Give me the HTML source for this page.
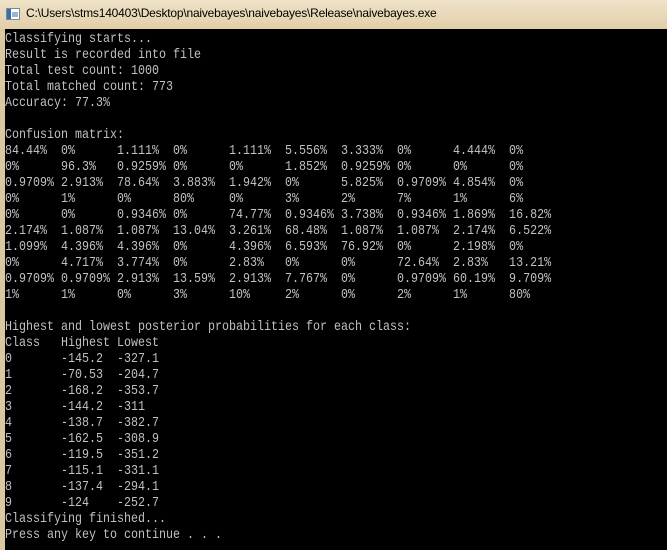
<!DOCTYPE html>
<html><head><style>
html,body{margin:0;padding:0;width:667px;height:550px;overflow:hidden;background:#000}
.t{position:absolute;left:0;top:0;width:667px;height:29px;background:linear-gradient(#efe2c8,#e2cfa9);}
.t .ic{position:absolute;left:6px;top:8px;width:12px;height:10px;background:#fff;border:1px solid #7a8a9a}
.t .ic:before{content:"";position:absolute;left:0;top:0;width:4px;height:10px;background:#3a6ea5}
.t .ic:after{content:"";position:absolute;left:5px;top:3px;width:6px;height:5px;background:#9db4cc}
.t span{position:absolute;left:26px;top:6px;font:12px "Liberation Sans",sans-serif;color:#000;letter-spacing:-0.2px}
.l{position:absolute;left:0;top:29px;width:5px;height:521px;background:#dcc8a0}
pre{position:absolute;left:5px;top:31px;margin:0;color:#c0c0c0;font:14px/16px "Liberation Mono",monospace;transform:scaleX(0.8333);transform-origin:0 0}
</style></head><body>
<div class="t"><div class="ic"></div><span>C:\Users\stms140403\Desktop\naivebayes\naivebayes\Release\naivebayes.exe</span></div>
<div class="l"></div>
<pre>Classifying starts...
Result is recorded into file
Total test count: 1000
Total matched count: 773
Accuracy: 77.3%

Confusion matrix:
84.44%  0%      1.111%  0%      1.111%  5.556%  3.333%  0%      4.444%  0%
0%      96.3%   0.9259% 0%      0%      1.852%  0.9259% 0%      0%      0%
0.9709% 2.913%  78.64%  3.883%  1.942%  0%      5.825%  0.9709% 4.854%  0%
0%      1%      0%      80%     0%      3%      2%      7%      1%      6%
0%      0%      0.9346% 0%      74.77%  0.9346% 3.738%  0.9346% 1.869%  16.82%
2.174%  1.087%  1.087%  13.04%  3.261%  68.48%  1.087%  1.087%  2.174%  6.522%
1.099%  4.396%  4.396%  0%      4.396%  6.593%  76.92%  0%      2.198%  0%
0%      4.717%  3.774%  0%      2.83%   0%      0%      72.64%  2.83%   13.21%
0.9709% 0.9709% 2.913%  13.59%  2.913%  7.767%  0%      0.9709% 60.19%  9.709%
1%      1%      0%      3%      10%     2%      0%      2%      1%      80%

Highest and lowest posterior probabilities for each class:
Class   Highest Lowest
0       -145.2  -327.1
1       -70.53  -204.7
2       -168.2  -353.7
3       -144.2  -311
4       -138.7  -382.7
5       -162.5  -308.9
6       -119.5  -351.2
7       -115.1  -331.1
8       -137.4  -294.1
9       -124    -252.7
Classifying finished...
Press any key to continue . . .</pre>
</body></html>
